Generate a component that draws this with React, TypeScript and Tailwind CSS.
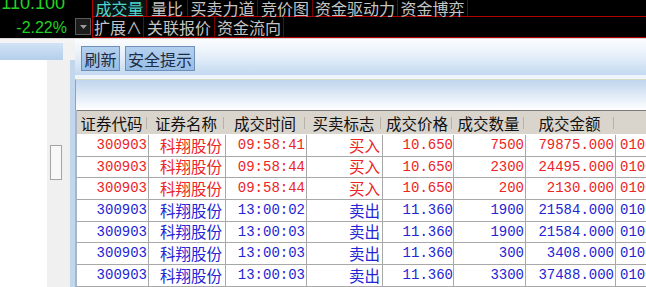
const cjk = "font-['Noto_Sans_CJK_SC','Noto_Sans_CJK_JP',sans-serif]";
const mono = "font-['Liberation_Mono','Noto_Sans_CJK_SC',monospace]";

const topTabs = [
  { label: '成交量', w: 'w-[54px]', active: true },
  { label: '量比', w: 'w-[41px]' },
  { label: '买卖力道', w: 'w-[70px]' },
  { label: '竞价图', w: 'w-[55px]' },
  { label: '资金驱动力', w: 'w-[85px]' },
  { label: '资金博弈', w: 'w-[70px]' },
];

const subTabs = [
  { label: '扩展∧', w: 'w-[51px]' },
  { label: '关联报价', w: 'w-[71px]' },
  { label: '资金流向', w: 'w-[69px]' },
];

const cols = [
  { label: '证券代码', w: 'w-[72px]' },
  { label: '证券名称', w: 'w-[77px]' },
  { label: '成交时间', w: 'w-[81px]' },
  { label: '买卖标志', w: 'w-[76px]' },
  { label: '成交价格', w: 'w-[71px]' },
  { label: '成交数量', w: 'w-[72px]' },
  { label: '成交金额', w: 'w-[90px]' },
];

const trades = [
  { time: '09:58:41', side: '买入', price: '10.650', qty: '7500', amt: '79875.000', buy: true, h: 'h-[22px]' },
  { time: '09:58:44', side: '买入', price: '10.650', qty: '2300', amt: '24495.000', buy: true, h: 'h-[21px]' },
  { time: '09:58:44', side: '买入', price: '10.650', qty: '200', amt: '2130.000', buy: true, h: 'h-[22px]' },
  { time: '13:00:02', side: '卖出', price: '11.360', qty: '1900', amt: '21584.000', buy: false, h: 'h-[22px]' },
  { time: '13:00:03', side: '卖出', price: '11.360', qty: '1900', amt: '21584.000', buy: false, h: 'h-[21px]' },
  { time: '13:00:03', side: '卖出', price: '11.360', qty: '300', amt: '3408.000', buy: false, h: 'h-[22px]' },
  { time: '13:00:03', side: '卖出', price: '11.360', qty: '3300', amt: '37488.000', buy: false, h: 'h-[22px]' },
];

function TopBar() {
  return (
    <div className="h-[38px] bg-black flex">
      <div className="w-[92px] flex flex-col">
        <div className="h-[17px] flex justify-end items-start pr-[27px] overflow-hidden">
          <span className="-mt-[6px] leading-[18px] text-[18px] text-[#22d022] font-['Liberation_Sans',sans-serif]">
            110.100
          </span>
        </div>
        <div className="h-[21px] flex items-center justify-end">
          <span className="mr-[8px] leading-[16px] text-[16px] text-[#22d022] font-['Liberation_Sans',sans-serif]">
            -2.22%
          </span>
          <div className="w-[16px] h-[17px] mr-[1px] self-start mt-[1px] border border-[#5a5a5a] bg-[#1c1c1c] flex items-center justify-center">
            <svg width="7" height="4" viewBox="0 0 7 4">
              <path d="M0 0h7L3.5 4z" fill="#9a9a9a" />
            </svg>
          </div>
        </div>
      </div>
      <div className={`flex-1 flex flex-col border-l border-[#b00000] ${cjk}`}>
        <div className="h-[17px] flex border-b border-[#b00000]">
          {topTabs.map((t) => (
            <div
              key={t.label}
              className={`${t.w} flex items-center justify-center border-r border-[#7a0000] text-[16px] leading-[16px] ${
                t.active ? 'text-[#4fd6cf] bg-[#0a1414]' : 'text-[#c4c4c4]'
              }`}
            >
              {t.label}
            </div>
          ))}
        </div>
        <div className="h-[21px] flex border-b border-[#b00000]">
          {subTabs.map((t) => (
            <div
              key={t.label}
              className={`${t.w} flex items-center justify-center border-r border-[#7a0000] text-[16px] leading-[16px] text-[#c4c4c4]`}
            >
              {t.label}
            </div>
          ))}
        </div>
      </div>
    </div>
  );
}

function LeftPanel() {
  return (
    <div className="w-[75px] flex flex-col bg-white">
      <div className="h-[4px] bg-[#f4f4f4]" />
      <div className="flex h-[17px]">
        <div className="w-[63px] bg-gradient-to-b from-[#d2e3f4] to-[#b4cfeb]" />
        <div className="flex-1 bg-[#f2f2f2]" />
      </div>
      <div className="flex flex-1">
        <div className="w-[47px] bg-white" />
        <div className="w-[23px] bg-[#f0f0f0] pt-[85px] pl-[3px]">
          <div className="w-[12px] h-[35px] border border-[#a4a4a4] bg-[#f8f8f8]" />
        </div>
        <div className="w-[5px] bg-[#c2d6ec]" />
      </div>
    </div>
  );
}

function Cell({ w, children, className = '' }: { w: string; children: React.ReactNode; className?: string }) {
  return (
    <div className={`${w} shrink-0 flex items-center justify-end border-r border-b border-[#a8a8a8] overflow-hidden ${className}`}>
      {children}
    </div>
  );
}

function TradeTable() {
  return (
    <div className="border-l-2 border-[#a6b6c8] bg-white">
      <div className={`h-[25px] flex border-t border-[#7c7c7c] border-b border-b-white bg-[#d9d5cd] ${cjk}`}>
        {cols.map((c) => (
          <div key={c.label} className={`${c.w} shrink-0 flex items-center`}>
            <span className="flex-1 text-center text-[15.5px] leading-[16px] text-[#111]">{c.label}</span>
            <div className="w-px h-[12px] bg-[#b6b2aa] mr-[2px]" />
          </div>
        ))}
        <div className="flex-1" />
      </div>
      {trades.map((r, i) => {
        const color = r.buy ? 'text-[#ec2424]' : 'text-[#2424d4]';
        return (
          <div key={i} className={`${r.h} flex ${color}`}>
            <Cell w="w-[72px]" className={`${mono} text-[14px] pr-[1px]`}>300903</Cell>
            <Cell w="w-[77px]" className={`${cjk} text-[15.5px] pr-[3px]`}>科翔股份</Cell>
            <Cell w="w-[81px]" className={`${mono} text-[14px] pr-[1px]`}>{r.time}</Cell>
            <Cell w="w-[76px]" className={`${cjk} text-[15.5px] pr-[2px]`}>{r.side}</Cell>
            <Cell w="w-[71px]" className={`${mono} text-[14px] pr-[0px]`}>{r.price}</Cell>
            <Cell w="w-[72px]" className={`${mono} text-[14px] pr-[1px]`}>{r.qty}</Cell>
            <Cell w="w-[90px]" className={`${mono} text-[14px] pr-[1px]`}>{r.amt}</Cell>
            <div className={`flex-1 flex items-center pl-[4px] border-b border-[#a8a8a8] overflow-hidden whitespace-nowrap ${mono} text-[14px]`}>
              0100000
            </div>
          </div>
        );
      })}
    </div>
  );
}

export default function App() {
  return (
    <div className="w-[646px] h-[287px] overflow-hidden bg-white flex flex-col">
      <TopBar />
      <div className="h-[3px] bg-[#dcd6d6]" />
      <div className="flex flex-1">
        <LeftPanel />
        <div className={`w-[571px] flex flex-col ${cjk}`}>
          <div className="h-[36px] flex items-start gap-[5px] pt-[7px] pl-[6px] bg-gradient-to-b from-[#fbfdff] via-[#e4eef9] to-[#c3d9f0]">
            <button className="w-[39px] h-[25px] border border-[#6e8fb8] bg-gradient-to-b from-[#b4d0ee] to-[#98bde6] text-[16px] leading-[16px] text-[#1c2c44]">
              刷新
            </button>
            <button className="w-[70px] h-[25px] border border-[#6e8fb8] bg-gradient-to-b from-[#b4d0ee] to-[#98bde6] text-[16px] leading-[16px] text-[#1c2c44]">
              安全提示
            </button>
          </div>
          <div className="h-[35px] pt-[4px] bg-[#eef4fb]">
            <div className="h-[31px] border-t border-[#d6dcc2] border-l border-l-[#a0a0a0] bg-gradient-to-b from-[#c0d6ee] via-[#dfeaf7] to-white" />
          </div>
          <TradeTable />
        </div>
      </div>
    </div>
  );
}
